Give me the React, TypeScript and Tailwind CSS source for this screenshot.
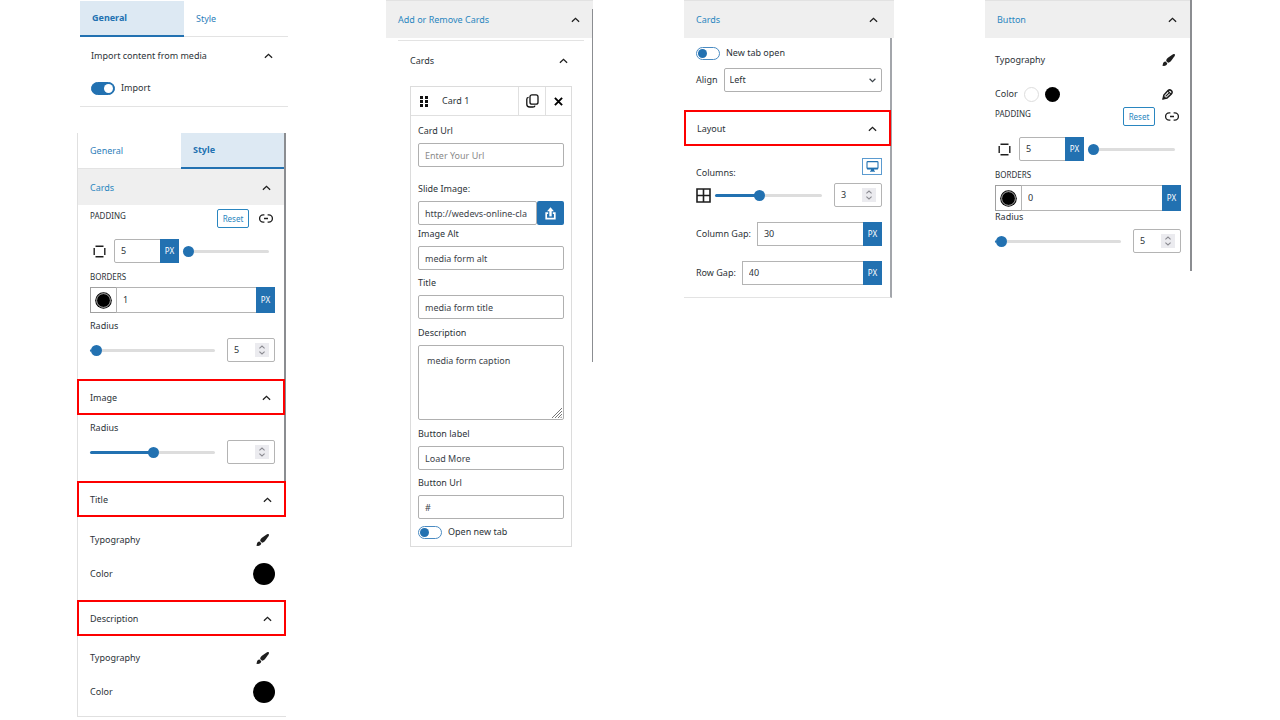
import { useId, useState, type ReactNode } from "react";

function Chevron() {
  return (
    <svg width="9" height="6" viewBox="0 0 9 6" fill="none" stroke="#1e1e1e" strokeWidth="1.3" aria-hidden="true">
      <path d="M0.9 4.8 L4.5 1.4 L8.1 4.8" />
    </svg>
  );
}

function SelectArrow() {
  return (
    <svg width="7" height="5" viewBox="0 0 7 5" fill="none" stroke="#3c434a" strokeWidth="1.2" aria-hidden="true">
      <path d="M0.6 0.8 L3.5 3.6 L6.4 0.8" />
    </svg>
  );
}

function BrushIcon() {
  return (
    <svg width="13" height="12" viewBox="0 0 13 12" fill="#1e1e1e" aria-hidden="true">
      <path d="M12.7 0.2C13.1 0.6 13 1.4 12.5 2.2L9.2 6.8C8.4 7.9 7.4 8.5 6.1 8.7L4.1 6.9C4.2 5.7 4.7 4.8 5.6 4L10.6 0.5C11.5-0.1 12.2-0.2 12.7 0.2Z" />
      <path d="M3.5 7.6L5.3 9.2C5 10.9 3.6 11.9 1.9 11.9C1.1 11.9 0.5 11.8 0 11.6C0.7 11.2 0.8 10.7 0.9 9.9C1.1 8.5 2.2 7.5 3.5 7.6Z" />
    </svg>
  );
}

function LinkIcon() {
  return (
    <svg width="14" height="9" viewBox="0 0 14 9" fill="none" stroke="#1e1e1e" strokeWidth="1.3" aria-hidden="true">
      <path d="M5.4 0.9H4.2A3.6 3.6 0 0 0 4.2 8.1H5.4M8.6 0.9H9.8A3.6 3.6 0 0 1 9.8 8.1H8.6M5 4.5H9" />
    </svg>
  );
}

function SidesIcon() {
  return (
    <svg width="13" height="13" viewBox="0 0 13 13" fill="none" stroke="#1e1e1e" strokeWidth="1.4" aria-hidden="true">
      <path d="M2.5 1.2H10.5M2.5 11.8H10.5M1.2 3V10M11.8 3V10" />
    </svg>
  );
}

function CopyIcon() {
  return (
    <svg width="13" height="14" viewBox="0 0 13 14" fill="none" stroke="#111" strokeWidth="1.3" aria-hidden="true">
      <rect x="4" y="0.8" width="8" height="9.4" rx="2" />
      <path d="M2.6 3.4C1.4 3.5 0.8 4.2 0.8 5.3V10.2C0.8 12 1.9 13 3.6 13H6.8C8 13 8.8 12.6 9 11.6" />
    </svg>
  );
}

function CloseIcon() {
  return (
    <svg width="9" height="9" viewBox="0 0 9 9" fill="none" stroke="#000" strokeWidth="1.9" aria-hidden="true">
      <path d="M0.9 0.9L8.1 8.1M8.1 0.9L0.9 8.1" />
    </svg>
  );
}

function DragIcon() {
  return (
    <svg width="8" height="11" viewBox="0 0 8 11" fill="#111" aria-hidden="true">
      <path d="M0 0h3v3H0zM5 0h3v3H5zM0 4h3v3H0zM5 4h3v3H5zM0 8h3v3H0zM5 8h3v3H5z" />
    </svg>
  );
}

function UploadIcon() {
  return (
    <svg width="11" height="13" viewBox="0 0 11 13" fill="none" stroke="#fff" strokeWidth="1.7" aria-hidden="true">
      <path d="M3.2 6.2H1.2V11.6H9.8V6.2H7.8" />
      <path d="M5.5 9.4V3.6" strokeWidth="2.4" />
      <path d="M5.5 0.2L8.9 4.3H2.1Z" fill="#fff" stroke="none" />
    </svg>
  );
}

function MonitorIcon() {
  return (
    <svg width="13" height="11" viewBox="0 0 13 11" fill="none" stroke="#2271b1" aria-hidden="true">
      <rect x="1" y="0.6" width="11" height="7" rx="0.8" strokeWidth="1.1" />
      <path d="M1 7.5H12" strokeWidth="1.8" />
      <path d="M6.5 8V10" strokeWidth="3" />
      <path d="M4 10.2H9" strokeWidth="1" />
    </svg>
  );
}

function GridIcon() {
  return (
    <svg width="15" height="15" viewBox="0 0 15 15" fill="none" stroke="#1e1e1e" strokeWidth="1.6" aria-hidden="true">
      <path d="M1 1H14V14H1ZM7.5 1V14M1 7.5H14" />
    </svg>
  );
}

function PencilIcon() {
  return (
    <svg width="11" height="11" viewBox="0 0 11 11" fill="none" stroke="#1e1e1e" strokeWidth="1.5" aria-hidden="true">
      <path d="M1.1 9.9L1.9 6L6 1.6C7.2 0.5 8.2 0.6 9.3 1.6C10.4 2.7 10.5 3.7 9.4 4.9L5 9.1Z" />
      <path d="M5.8 2L9 5.2M3.6 7.4L7.2 3.8" strokeWidth="1.2" />
      <path d="M0.5 10.5L1.5 6.4L4.7 9.4Z" fill="#1e1e1e" stroke="none" />
    </svg>
  );
}

function Heading({ children, look = "pr-3.5" }: { children: ReactNode; look?: string }) {
  return (
    <h2>
      <button type="button" aria-expanded="true" className={"flex min-h-9 w-full items-center justify-between pt-px text-left " + look}>
        <span>{children}</span>
        <Chevron />
      </button>
    </h2>
  );
}

const marked = "border-2 border-[#fd0000] pr-3 pl-[11px]";
const shaded = "h-[38px] border-t border-[#e2e2e2] bg-[#efefef] pl-3 text-[#2a86c0]";

function Tabs({ active, names }: { active: string; names: string[] }) {
  return (
    <div role="tablist" className="flex h-9 border-b border-[#e3e3e3]">
      {names.map((name) => (
        <button
          key={name}
          type="button"
          role="tab"
          aria-selected={name === active}
          className={
            name === active
              ? "-mb-px flex-1 border-b-2 border-[#2271b1] bg-[#dde9f3] px-3 text-left font-bold text-[#2271b1]"
              : "flex-1 px-3 text-left text-[#2e80ba]"
          }
        >
          {name}
        </button>
      ))}
    </div>
  );
}

function Toggle({ label, initial = false }: { label: string; initial?: boolean }) {
  const [on, setOn] = useState(initial);
  return (
    <label className="flex items-center gap-1.5">
      <input
        type="checkbox"
        role="switch"
        checked={on}
        onChange={() => setOn(!on)}
        className="flex h-[13px] w-6 shrink-0 appearance-none items-center rounded-full border border-[#4a8bc2] bg-white px-px before:size-[9px] before:rounded-full before:bg-[#2271b1] checked:justify-end checked:border-[#2271b1] checked:bg-[#2271b1] checked:before:bg-white"
      />
      {label}
    </label>
  );
}

function Slider({ label, initial }: { label: string; initial: number }) {
  const [value, setValue] = useState(initial);
  return (
    <input
      type="range"
      aria-label={label}
      min="0"
      max="100"
      value={value}
      onChange={(e) => setValue(Number(e.target.value))}
      style={{ backgroundImage: `linear-gradient(to right, #2271b1 ${value}%, #dddddd ${value}%)` }}
      className="h-[3px] w-0 min-w-0 flex-1 appearance-none rounded-full [&::-webkit-slider-thumb]:size-[11px] [&::-webkit-slider-thumb]:appearance-none [&::-webkit-slider-thumb]:rounded-full [&::-webkit-slider-thumb]:bg-[#2271b1]"
    />
  );
}

function NumberBox({ id, label, initial }: { id?: string; label?: string; initial: string }) {
  const [value, setValue] = useState(initial);
  return (
    <span className="flex h-6 w-12 shrink-0 items-center rounded-xs border border-[#b4b4b4] pr-[5px]">
      <input
        id={id}
        aria-label={label}
        type="number"
        value={value}
        onChange={(e) => setValue(e.target.value)}
        className="w-0 min-w-0 flex-1 appearance-none pl-1.5 outline-none [-moz-appearance:textfield] [&::-webkit-inner-spin-button]:appearance-none"
      />
      <svg width="14" height="14" viewBox="0 0 14 14" fill="none" stroke="#8a8a90" strokeWidth="1.1" aria-hidden="true">
        <rect width="14" height="14" fill="#ebebef" stroke="none" />
        <path d="M4.4 5.3L7 3L9.6 5.3M4.4 8.7L7 11L9.6 8.7" />
      </svg>
    </span>
  );
}

function PxBox({ id, label, initial, look }: { id?: string; label?: string; initial: string; look: string }) {
  const [value, setValue] = useState(initial);
  return (
    <span className={"flex items-stretch border border-[#b4b4b4] " + look}>
      <input
        id={id}
        aria-label={label}
        value={value}
        onChange={(e) => setValue(e.target.value)}
        className="w-0 min-w-0 flex-1 pl-1.5 outline-none"
      />
      <button type="button" aria-label="Unit: PX" className="-my-px -mr-px w-[19px] bg-[#2271b1] text-[8px] text-white">
        PX
      </button>
    </span>
  );
}

function RadiusField({ slider, number }: { slider: number; number: string }) {
  const id = useId();
  return (
    <div>
      <label htmlFor={id} className="block">Radius</label>
      <div className="mt-1 flex items-center gap-3">
        <Slider label="Radius" initial={slider} />
        <NumberBox id={id} initial={number} />
      </div>
    </div>
  );
}

function SpacingFields({ border }: { border: string }) {
  return (
    <>
      <div className="flex items-start justify-between">
        <span className="text-[8px]">PADDING</span>
        <span className="flex items-center gap-2.5 pt-px pr-0.5">
          <button type="button" className="h-[19px] w-8 rounded-xs border border-[#2a86c0] text-[8px] text-[#2a86c0]">
            Reset
          </button>
          <button type="button" aria-label="Link sides"><LinkIcon /></button>
        </span>
      </div>
      <div className="mt-[11px] flex items-center">
        <span className="flex w-6 pl-[3px]"><SidesIcon /></span>
        <PxBox label="Padding" initial="5" look="h-6 w-[65px] rounded-xs" />
        <span className="flex min-w-0 flex-1 items-center pr-1.5 pl-1"><Slider label="Padding size" initial={0} /></span>
      </div>
      <p className="mt-1.5 text-[8px]">BORDERS</p>
      <div className="mt-0.5 flex h-[26px] items-stretch">
        <button type="button" aria-label="Border color" className="flex w-[26px] items-center justify-center border border-r-0 border-[#a0a0a0]">
          <svg width="17" height="17" viewBox="0 0 17 17" aria-hidden="true">
            <circle cx="8.5" cy="8.5" r="8.3" />
            <circle cx="8.5" cy="8.5" r="6.9" fill="none" stroke="#ddd" strokeWidth="0.8" />
          </svg>
        </button>
        <PxBox label="Border width" initial={border} look="flex-1" />
      </div>
    </>
  );
}

function TypeRow() {
  return (
    <div className="flex h-6 items-center justify-between">
      <span>Typography</span>
      <button type="button" aria-label="Edit typography" className="pr-1.5"><BrushIcon /></button>
    </div>
  );
}

function ColorRow() {
  return (
    <div className="mt-2.5 flex h-6 items-center justify-between">
      <span>Color</span>
      <button type="button" aria-label="Pick color" className="size-[22px] rounded-full bg-black" />
    </div>
  );
}

function TextField({ label, initial = "", placeholder, look = "" }: { label: string; initial?: string; placeholder?: string; look?: string }) {
  const id = useId();
  const [value, setValue] = useState(initial);
  return (
    <div className={look}>
      <label htmlFor={id} className="block">{label}</label>
      <input
        id={id}
        value={value}
        placeholder={placeholder}
        onChange={(e) => setValue(e.target.value)}
        className="mt-1 block h-6 w-full rounded-xs border border-[#b0b0b0] px-1.5 text-[#3c434a] placeholder:text-[#8a8a8a]"
      />
    </div>
  );
}

function GeneralPanel() {
  return (
    <section className="mr-[7px] ml-[3px] border-b border-[#e3e3e3] pb-2.5">
      <Tabs active="General" names={["General", "Style"]} />
      <div className="pr-px pl-[11px]"><Heading>Import content from media</Heading></div>
      <div className="pt-[7px] pl-[11px]"><Toggle label="Import" initial /></div>
    </section>
  );
}

function StylePanel() {
  return (
    <section className="mt-[26px] mr-[9px]">
      <div className="border-r-2 border-l border-r-[#8b8d91] border-l-[#e0e0e0]">
        <Tabs active="Style" names={["General", "Style"]} />
        <Heading look="bg-[#efefef] pr-[13px] pl-3 text-[#2a86c0]">Cards</Heading>
        <div className="pt-[3px] pr-[9px] pl-3">
          <SpacingFields border="1" />
          <div className="mt-[5px]"><RadiusField slider={1} number="5" /></div>
        </div>
        <div className="-mr-px -ml-px mt-[17px]"><Heading look={marked}>Image</Heading></div>
        <div className="mt-[5px] pr-[9px] pl-3"><RadiusField slider={51} number="" /></div>
        <div className="-mr-0.5 -ml-px mt-[17px]"><Heading look={marked}>Title</Heading></div>
      </div>
      <div className="border-l border-[#e0e0e0]">
        <div className="pt-[11px] pr-[11px] pl-3"><TypeRow /><ColorRow /></div>
        <div className="-ml-px mt-3.5"><Heading look={marked}>Description</Heading></div>
        <div className="border-b border-[#e0e0e0] pt-2.5 pr-[11px] pb-3 pl-3"><TypeRow /><ColorRow /></div>
      </div>
    </section>
  );
}

function CardEditor() {
  const urlId = useId();
  const textId = useId();
  const [url, setUrl] = useState("http://wedevs-online-cla");
  const [text, setText] = useState("media form caption");
  return (
    <article className="border border-[#dcdcdc]">
      <header className="flex h-[29px] items-stretch border-b border-[#e0e0e0]">
        <span className="flex flex-1 items-center gap-3.5 pl-[9px]"><DragIcon />Card 1</span>
        <button type="button" aria-label="Duplicate card" className="flex w-[27px] items-center justify-center border-l border-[#e0e0e0]"><CopyIcon /></button>
        <button type="button" aria-label="Remove card" className="flex w-[26px] items-center justify-center border-l border-[#e0e0e0]"><CloseIcon /></button>
      </header>
      <div className="px-[7px] pt-[7px] pb-1.5">
        <TextField label="Card Url" placeholder="Enter Your Url" />
        <div className="mt-3.5">
          <label htmlFor={urlId} className="block">Slide Image:</label>
          <div className="mt-1 flex">
            <input
              id={urlId}
              value={url}
              onChange={(e) => setUrl(e.target.value)}
              className="h-6 w-0 min-w-0 flex-1 rounded-xs border border-[#b0b0b0] pr-1 pl-1.5 text-[#3c434a]"
            />
            <button type="button" aria-label="Upload image" className="flex w-[27px] items-center justify-center rounded-xs bg-[#2271b1]"><UploadIcon /></button>
          </div>
        </div>
        <TextField look="mt-px" label="Image Alt" initial="media form alt" />
        <TextField look="mt-[5px]" label="Title" initial="media form title" />
        <div className="mt-1.5">
          <label htmlFor={textId} className="block">Description</label>
          <div className="relative mt-1">
            <textarea
              id={textId}
              value={text}
              onChange={(e) => setText(e.target.value)}
              className="block h-[75px] w-full resize-none rounded-xs border border-[#b0b0b0] px-2 py-[7px] text-[#3c434a]"
            />
            <svg className="pointer-events-none absolute right-0.5 bottom-0.5" width="10" height="10" viewBox="0 0 10 10" stroke="#777" aria-hidden="true">
              <path d="M0 10L10 0M3 10L10 3M6 10L10 6M8.6 10L10 8.6" />
            </svg>
          </div>
        </div>
        <TextField look="mt-1.5" label="Button label" initial="Load More" />
        <TextField look="mt-[5px]" label="Button Url" initial="#" />
        <div className="mt-[5px]"><Toggle label="Open new tab" /></div>
      </div>
    </article>
  );
}

function AddCardsPanel() {
  return (
    <section className="relative">
      <Heading look={shaded + " pr-[13px]"}>Add or Remove Cards</Heading>
      <div className="mt-0.5 mr-[9px] ml-3 border-t border-[#e3e3e3] pt-px">
        <div className="pr-0.5 pl-3"><Heading>Cards</Heading></div>
        <div className="mt-2 mr-3 ml-3"><CardEditor /></div>
      </div>
      <div className="absolute top-[9px] right-0 h-[353px] w-px bg-[#8b8d91]" />
    </section>
  );
}

function LayoutPanel() {
  const align = useId();
  const columns = useId();
  const colGap = useId();
  const rowGap = useId();
  return (
    <section>
      <Heading look={shaded + " pr-4"}>Cards</Heading>
      <div className="mr-0.5 border-r-2 border-b border-r-[#a3a6ab] border-b-[#e3e3e3] pb-3">
        <div className="pt-[7px] pr-2 pl-3">
          <Toggle label="New tab open" />
          <div className="mt-[7px] flex items-center gap-1.5">
            <label htmlFor={align}>Align</label>
            <span className="relative flex flex-1 items-center">
              <select id={align} defaultValue="Left" className="h-6 w-full appearance-none rounded-xs border border-[#b0b0b0] bg-white px-[5px]">
                <option>Left</option>
                <option>Center</option>
                <option>Right</option>
              </select>
              <span className="pointer-events-none absolute right-1.5"><SelectArrow /></span>
            </span>
          </div>
        </div>
        <div className="-mr-px mt-[18px]"><Heading look={marked}>Layout</Heading></div>
        <div className="pt-3 pr-2 pl-3">
          <div className="flex items-end justify-between">
            <label htmlFor={columns} className="mb-0.5">Columns:</label>
            <button type="button" aria-label="Desktop view" className="mb-2 flex h-[17px] w-5 items-center justify-center border border-[#5b9bd0]"><MonitorIcon /></button>
          </div>
          <div className="flex items-center">
            <GridIcon />
            <span className="flex min-w-0 flex-1 items-center pr-3 pl-1"><Slider label="Columns" initial={41} /></span>
            <NumberBox id={columns} initial="3" />
          </div>
          <div className="mt-[15px] flex items-center gap-1.5">
            <label htmlFor={colGap}>Column Gap:</label>
            <PxBox id={colGap} initial="30" look="h-6 flex-1" />
          </div>
          <div className="mt-[15px] flex items-center gap-1.5">
            <label htmlFor={rowGap}>Row Gap:</label>
            <PxBox id={rowGap} initial="40" look="h-6 flex-1" />
          </div>
        </div>
      </div>
    </section>
  );
}

function ButtonPanel() {
  return (
    <section className="border-r-2 border-[#8b8d91] pb-[18px]">
      <Heading look={shaded + " pr-[13px]"}>Button</Heading>
      <div className="pt-2.5 pr-[9px] pl-2.5">
        <TypeRow />
        <div className="mt-2.5 flex h-6 items-center justify-between pr-2">
          <span className="flex items-center gap-1.5">
            Color
            <button type="button" aria-label="Text color" className="size-[15px] rounded-full border border-[#dddddd] bg-white" />
            <button type="button" aria-label="Background color" className="size-[15px] rounded-full bg-black" />
          </span>
          <button type="button" aria-label="Edit color"><PencilIcon /></button>
        </div>
        <SpacingFields border="0" />
        <div className="-mt-0.5"><RadiusField slider={1} number="5" /></div>
      </div>
    </section>
  );
}

export default function App() {
  return (
    <main className="grid grid-cols-[minmax(0,218fr)_minmax(0,207fr)_minmax(0,210fr)_minmax(0,207fr)] items-start gap-x-[91px] bg-white pr-[88px] pl-[77px] font-['Noto_Sans','Open_Sans',sans-serif] text-[9px] leading-4 text-[#2c3338]">
      <div className="pt-px">
        <GeneralPanel />
        <StylePanel />
      </div>
      <AddCardsPanel />
      <LayoutPanel />
      <ButtonPanel />
    </main>
  );
}
